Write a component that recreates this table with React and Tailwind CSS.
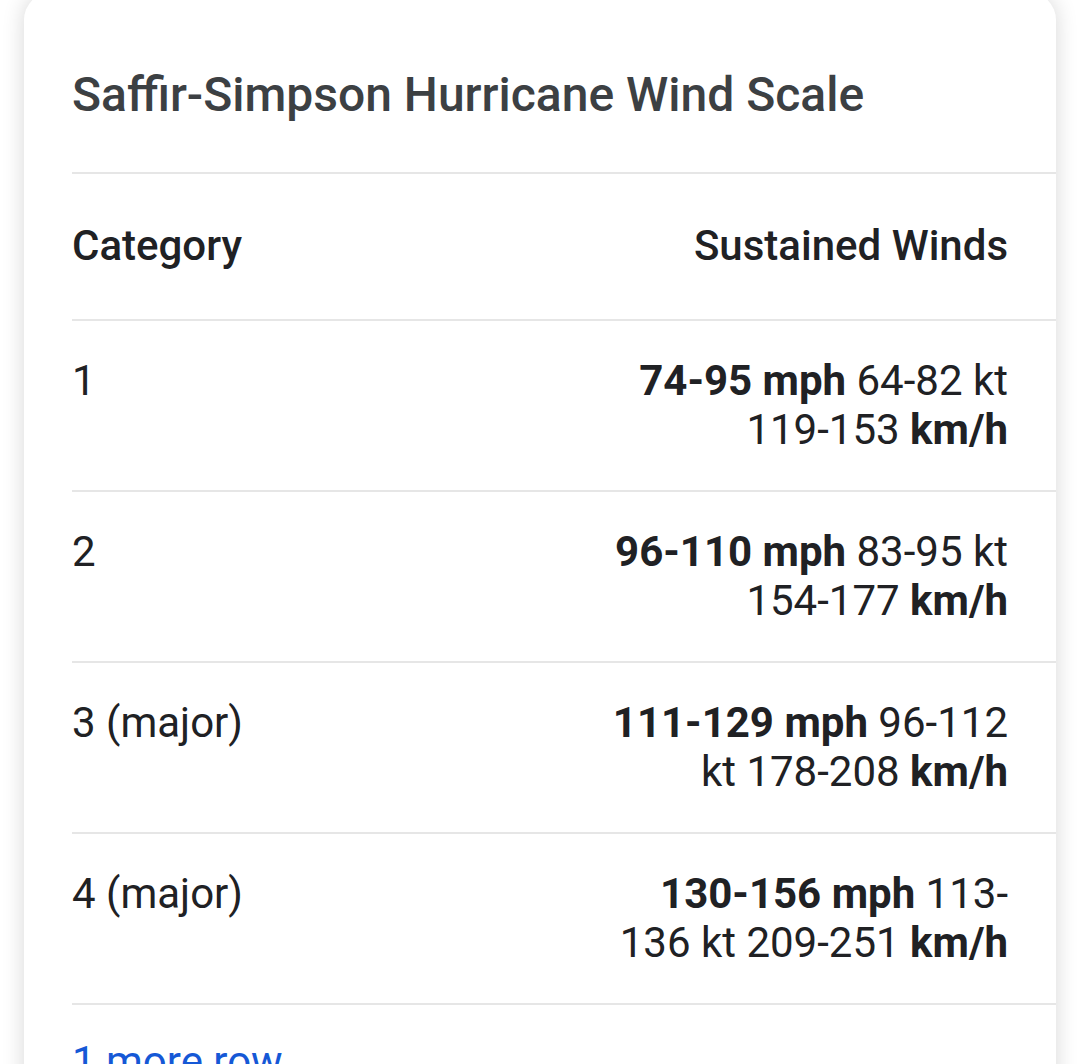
import React from 'react';

const rows = [
  { cat: '1', mph: '74-95', kt: '64-82', kmh: '119-153' },
  { cat: '2', mph: '96-110', kt: '83-95', kmh: '154-177' },
  { cat: '3 (major)', mph: '111-129', kt: '96-112', kmh: '178-208' },
  { cat: '4 (major)', mph: '130-156', kt: '113-136', kmh: '209-251' },
];

export default function App() {
  return (
    <div className="h-[1064px] overflow-hidden bg-white" style={{ fontFamily: 'Roboto, "Noto Sans", sans-serif' }}>
      <div className="mx-6 -mt-2 rounded-[28px] bg-white pl-12 shadow-[0_0_22px_rgba(0,0,0,0.16)]">
        <div className="pt-[75px] pb-[49px] pr-12 text-[48px] leading-[56px] font-medium text-[#3c4043]">
          Saffir-Simpson Hurricane Wind Scale
        </div>

        <div className="flex items-start justify-between border-t-2 border-[#e6e6e6] pt-[48px] pb-[49px] pr-12 text-[42px] leading-[48px] font-medium text-[#202124]">
          <span>Category</span>
          <span>Sustained Winds</span>
        </div>

        {rows.map((r) => (
          <div
            key={r.cat}
            className="flex items-start justify-between border-t-2 border-[#e6e6e6] pt-[35px] pb-[36px] pr-12 text-[42px] leading-[49px] text-[#202124]"
          >
            <span>{r.cat}</span>
            <span className="w-[405px] text-right">
              <b className="font-bold">{r.mph} mph</b> {r.kt} kt {r.kmh} <b className="font-bold">km/h</b>
            </span>
          </div>
        ))}

        <div className="border-t-2 border-[#e6e6e6] pt-[32px] pb-10 text-[42px] leading-[49px]">
          <a className="text-[#1558d6]">1 more row</a>
        </div>
      </div>
    </div>
  );
}
